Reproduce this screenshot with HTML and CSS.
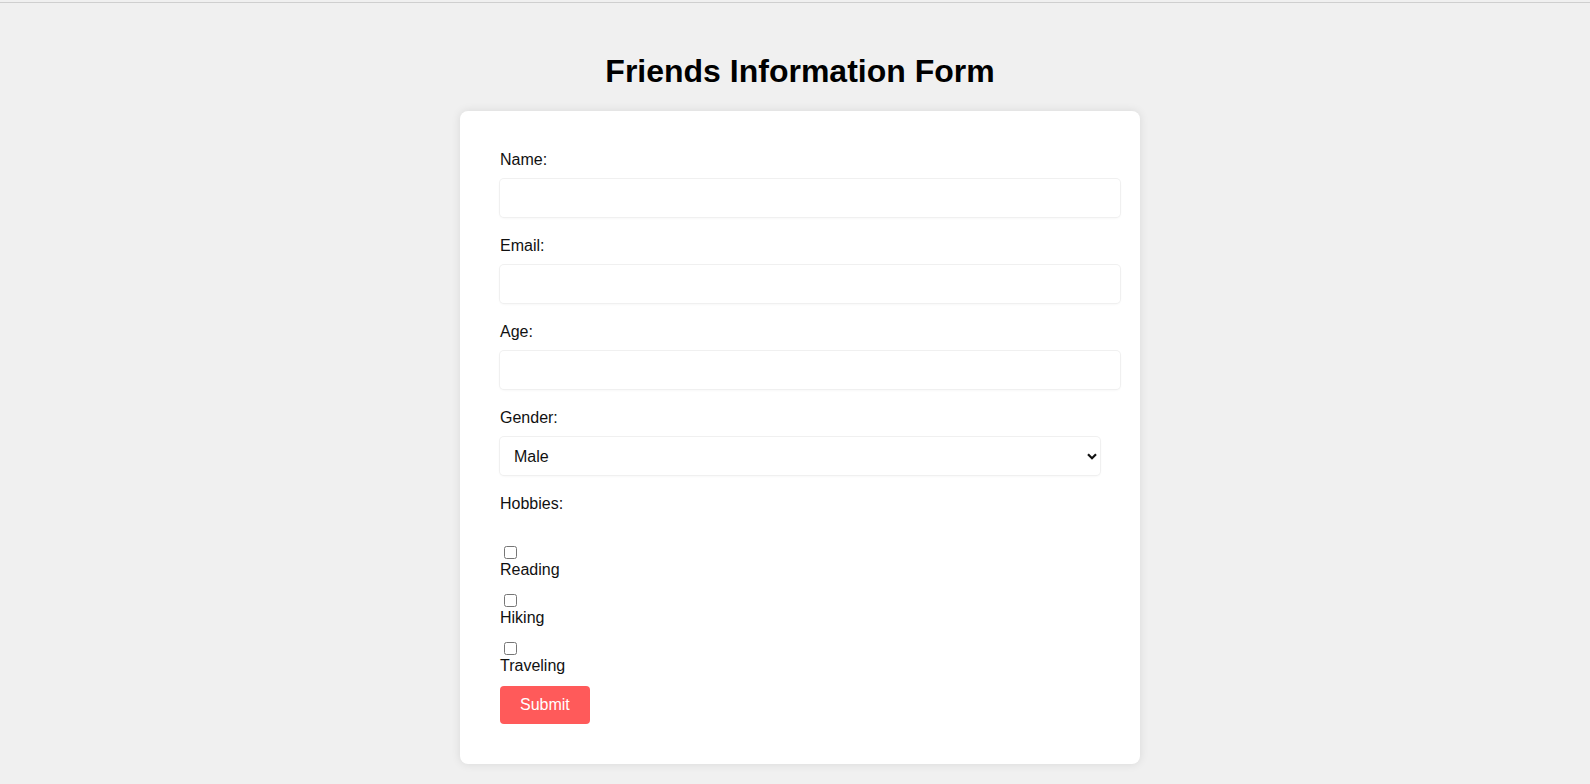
FILE: index.html
```html
<!DOCTYPE html>
<html lang="en">
<head>
<meta charset="utf-8">
<title>Friends Information Form</title>
<link rel="stylesheet" href="styles.css">
</head>
<body>
<div class="page">
  <h1 class="title">Friends Information Form</h1>
  <form class="card">
    <label class="field-label" for="name">Name:</label>
    <input class="text-input" type="text" id="name">

    <label class="field-label" for="email">Email:</label>
    <input class="text-input" type="email" id="email">

    <label class="field-label" for="age">Age:</label>
    <input class="text-input" type="number" id="age">

    <label class="field-label" for="gender">Gender:</label>
    <div class="select-wrap">
      <select class="select" id="gender">
        <option>Male</option>
        <option>Female</option>
        <option>Other</option>
      </select>
      <svg class="chevron" width="10" height="7" viewBox="0 0 10 7" aria-hidden="true"><path d="M1 1.2 L5 5.2 L9 1.2" fill="none" stroke="#111" stroke-width="2.2"/></svg>
    </div>

    <span class="field-label group-label">Hobbies:</span>

    <div class="hobby">
      <input class="checkbox" type="checkbox" id="reading">
      <label class="field-label" for="reading">Reading</label>
    </div>

    <div class="hobby">
      <input class="checkbox" type="checkbox" id="hiking">
      <label class="field-label" for="hiking">Hiking</label>
    </div>

    <div class="hobby">
      <input class="checkbox" type="checkbox" id="traveling">
      <label class="field-label" for="traveling">Traveling</label>
    </div>

    <button class="submit" type="submit">Submit</button>
  </form>
</div>
</body>
</html>
```

FILE: styles.css
```css
html {
  background: #f0f0f0;
}

body {
  margin: 0;
  padding-top: 2px;
  font-family: "Liberation Sans", Arial, sans-serif;
  font-size: 16px;
  color: #111;
}

.page {
  border-top: 1px solid #cfcfcf;
  padding: 0 0 21px 10px;
  display: flex;
  flex-direction: column;
  align-items: center;
}

.title {
  margin: 50px 0 21px;
  font-size: 32px;
  line-height: 37px;
  font-weight: bold;
  color: #000;
}

.card {
  width: 600px;
  padding: 40px;
  background: #fff;
  border-radius: 8px;
  box-shadow: 0 0 10px rgba(0, 0, 0, 0.1);
}

.field-label {
  display: block;
  line-height: 18px;
  margin-bottom: 10px;
}

.group-label {
  margin-bottom: 28px;
}

.text-input {
  display: block;
  width: 100%;
  height: 18px;
  box-sizing: content-box;
  padding: 10px;
  margin: 0 0 20px;
  border: none;
  border-radius: 4px;
  background: #fff;
  box-shadow: 0 0 0 1px #f0f0f0, 0 1px 3px rgba(0, 0, 0, 0.06);
  font: inherit;
  color: #111;
  outline: none;
}

.select-wrap {
  position: relative;
  width: 100%;
  margin-bottom: 20px;
}

.select {
  display: block;
  width: 100%;
  height: 38px;
  box-sizing: border-box;
  padding: 0 0 0 14px;
  margin: 0;
  border: none;
  border-radius: 4px;
  background: #fff;
  box-shadow: 0 0 0 1px #f0f0f0, 0 1px 3px rgba(0, 0, 0, 0.06);
  font: inherit;
  color: #111;
  appearance: none;
  -webkit-appearance: none;
  outline: none;
}

.chevron {
  position: absolute;
  right: 3px;
  top: 16px;
  pointer-events: none;
}

.hobby {
  padding-top: 5px;
}

.checkbox {
  display: block;
  width: 13px;
  height: 13px;
  margin: 0 0 2px 4px;
}

.submit {
  display: block;
  margin-top: 11px;
  padding: 10px 20px;
  border: none;
  border-radius: 4px;
  background: #ff5a5a;
  color: #fff;
  font: inherit;
  line-height: 18px;
  cursor: pointer;
}
```
